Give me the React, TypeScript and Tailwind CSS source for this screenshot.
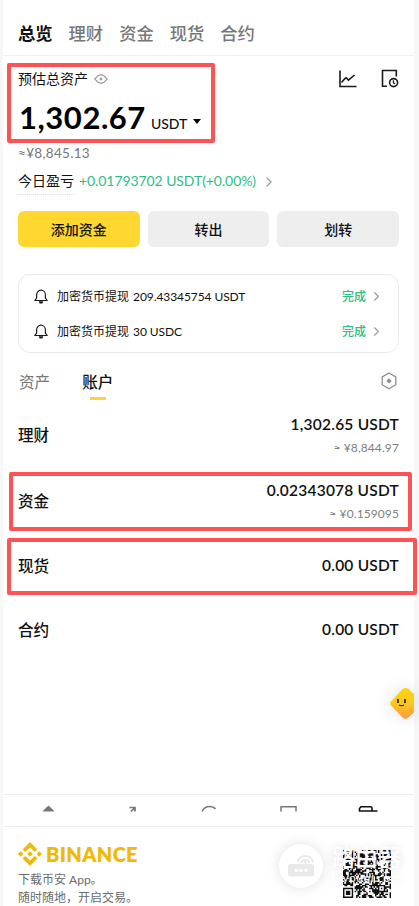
import React from 'react';
import { ChevronRight } from 'lucide-react';

const tabs = ['总览', '理财', '资金', '现货', '合约'];

const records = [
  { id: 1, label: '加密货币提现', amount: '209.43345754 USDT' },
  { id: 2, label: '加密货币提现', amount: '30 USDC' },
];

const accounts = [
  { name: '理财', amount: '1,302.65 USDT', fiat: '≈ ¥8,844.97', height: 'h-[66px]' },
  { name: '资金', amount: '0.02343078 USDT', fiat: '≈ ¥0.159095', height: 'h-[66px]' },
  { name: '现货', amount: '0.00 USDT', fiat: '', height: 'h-[64px]' },
  { name: '合约', amount: '0.00 USDT', fiat: '', height: 'h-[64px]' },
];

const QR_SIZE = 33;

const finder = (x: number, y: number) => {
  if (x < 0 || y < 0 || x > 6 || y > 6) return false;
  const ring = Math.max(Math.abs(x - 3), Math.abs(y - 3));
  return ring !== 2;
};

const buildModules = () => {
  const cells: string[] = [];
  let seed = 90217;
  for (let y = 0; y < QR_SIZE; y++) {
    for (let x = 0; x < QR_SIZE; x++) {
      seed = (seed * 16807) % 2147483647;
      let on = seed / 2147483647 > 0.42;
      const far = QR_SIZE - 7;
      if (x < 8 && y < 8) on = finder(x, y);
      else if (x >= far - 1 && y < 8) on = finder(x - far, y);
      else if (x < 8 && y >= far - 1) on = finder(x, y - far);
      else if (Math.abs(x - 26) < 3 && Math.abs(y - 26) < 3) {
        on = Math.max(Math.abs(x - 26), Math.abs(y - 26)) !== 1;
      }
      if (on) cells.push(`M${x} ${y}h1v1h-1z`);
    }
  }
  return cells.join('');
};

const qrPath = buildModules();

const EyeIcon = () => (
  <svg width="14" height="10" viewBox="0 0 14 10" fill="none" stroke="#999" strokeWidth="1.1">
    <path d="M.7 5 4 1.8Q7 0 10 1.8L13.3 5 10 8.2Q7 10 4 8.2Z" />
    <path d="M7 3.3 8.7 5 7 6.7 5.3 5Z" fill="#999" stroke="none" />
  </svg>
);

const ChartIcon = () => (
  <svg width="18" height="18" viewBox="0 0 18 18" fill="none" stroke="#1b1b1b" strokeWidth="1.6">
    <path d="M1 .5v16h16.5" />
    <path d="m2.5 12.5 3.5-4 1.500-.5 2 2.200L15.500 5" />
  </svg>
);

const HistoryIcon = () => (
  <svg width="18" height="19" viewBox="0 0 18 19" fill="none" stroke="#1b1b1b" strokeWidth="1.6">
    <path d="M6 17.300H1.500V1.500h13.800v6" />
    <circle cx="12.600" cy="13.600" r="4" />
    <path d="M12.400 11.300v2.500l1.600 1" strokeWidth="1.2" />
  </svg>
);

const BellIcon = () => (
  <svg width="14" height="15" viewBox="0 0 14 15" fill="none" stroke="#1b1b1b" strokeWidth="1.2" strokeLinejoin="round">
    <path d="M2.600 6a4.400 4.800 0 0 1 8.800 0v3.200l1.800 2.300H.8l1.800-2.300Z" />
    <path d="M4.700 12.300h4.600L8.400 14.400H5.600Z" fill="#1b1b1b" stroke="none" />
  </svg>
);

const HexIcon = () => (
  <svg width="16" height="18" viewBox="0 0 16 18" fill="none" stroke="#8f8f8f" strokeWidth="1.3">
    <path d="m8 1 6.800 3.900v7.800L8 16.700l-6.800-4V4.900Z" />
    <path d="M8 6.200 10.700 8.900 8 11.600 5.300 8.900Z" fill="#8f8f8f" stroke="none" />
  </svg>
);

const BinanceIcon = () => (
  <svg width="24" height="24" viewBox="0 0 24 24" fill="#efb90b">
    <path d="M7.340 10.100 12 5.440l4.660 4.660 2.710-2.710L12 0 4.630 7.390ZM0 12l2.710-2.710L5.420 12l-2.710 2.710ZM7.340 13.900 12 18.560l4.660-4.660 2.710 2.710L12 24l-7.370-7.390ZM18.580 12l2.710-2.710L24 12l-2.710 2.710ZM14.750 12 12 9.250 9.250 12 12 14.750Z" />
  </svg>
);

const Mascot = () => (
  <svg width="24" height="34" viewBox="0 0 24 34" className="drop-shadow-[0_0_9px_rgba(0,0,0,0.13)]">
    <defs>
      <linearGradient id="mascot" x1="0" y1="0" x2="0" y2="1">
        <stop offset="0" stopColor="#f7d60f" />
        <stop offset="0.5" stopColor="#fbc81c" />
        <stop offset="1" stopColor="#fd9a4a" />
      </linearGradient>
    </defs>
    <path d="M1 14.500 12.500 2Q15.500 0 18.500 2L24 7v18.500l-6 5.500q-2.500 1.500-5 0L1 18.500Q-.6 16.500 1 14.500Z" fill="url(#mascot)" />
    <path d="M8 12v4M15 12v4" stroke="#33270c" strokeWidth="1.8" />
    <path d="M9 18q2.500 1.200 5 0" fill="none" stroke="#33270c" strokeWidth="1.1" />
  </svg>
);

const BottomNav = () => (
  <nav className="h-[33px] border-y border-[#eeeeee] flex items-start justify-between pl-[39px] pr-[36px] pt-[10px] text-[#777]">
    <svg width="13" height="7" viewBox="0 0 13 7"><path d="M1 6.500V5.800L6.500.5 12 5.800v.7Z" fill="currentColor" /></svg>
    <svg className="ml-[6px]" width="14" height="7" viewBox="0 0 14 7" fill="none" stroke="currentColor" strokeWidth="1.7">
      <path d="M7.500 2.500H13v4M12.500 3 9 6.500" />
    </svg>
    <svg className="ml-[4px]" width="16" height="7" viewBox="0 0 16 7" fill="none" stroke="currentColor" strokeWidth="1.4">
      <path d="M1 6.500Q3.500 1.500 8.500 1.500q4 0 6 2.500" />
    </svg>
    <svg className="ml-[2px]" width="17" height="7" viewBox="0 0 17 7" fill="none" stroke="currentColor" strokeWidth="1.5">
      <path d="M1 6.500V1.800h15v4.700" />
    </svg>
    <svg width="20" height="7" viewBox="0 0 20 7" fill="none" stroke="#111" strokeWidth="1.6">
      <path d="M1.500 6.200V3.500l1.500-1.700h9.500q1.500 0 1.500 1.500v2.500M1 6h18.500" />
    </svg>
  </nav>
);

const RouterBadge = () => (
  <div className="size-11 rounded-full bg-white shadow-[0_0_14px_rgba(0,0,0,0.13)] flex items-center justify-center">
    <svg className="-mt-[3px]" width="26" height="24" viewBox="0 0 26 24" fill="#e9e9e9">
      <rect y="11" width="26" height="12.500" rx="2.500" />
      <g fill="none" stroke="#e9e9e9" strokeWidth="2">
        <path d="M9.500 9a8 8 0 0 1 15.500 0M13.300 10a4.200 4.200 0 0 1 8 0M17.300 7v5" />
      </g>
      <g fill="#fff">
        <circle cx="8" cy="17.500" r="1.700" />
        <circle cx="13" cy="17.500" r="1.700" />
        <circle cx="18" cy="17.500" r="1.700" />
      </g>
    </svg>
  </div>
);

const App: React.FC = () => {
  return (
    <div className="relative w-[419px] h-[906px] overflow-hidden bg-[#f7f7f7] pl-[3px] pr-[5px] font-['Lato','Noto_Sans_CJK_SC',sans-serif] text-[#111]">
      <div className="h-full bg-white flex flex-col">
        {/* Top tabs */}
        <header className="h-14 shrink-0 border-b border-[#f0f0f0] flex items-end gap-4 pl-[15px] pb-[9px] text-[17.3px] leading-[25px] text-[#777]">
          {tabs.map((tab, i) => (
            <span key={tab} className={i === 0 ? 'font-bold text-[#111]' : 'font-medium'}>{tab}</span>
          ))}
        </header>

        {/* Balance */}
        <section className="h-[155px] shrink-0 px-[15px] pt-3">
          <div className="flex justify-between h-[22px]">
            <div className="flex items-center gap-[6px] text-[14px] -mt-px">
              <span>预估总资产</span>
              <EyeIcon />
            </div>
            <div className="flex items-center gap-[24px] -mt-px">
              <ChartIcon />
              <HistoryIcon />
            </div>
          </div>
          <div className="h-[54px] pl-px flex items-baseline">
            <span className="text-[31px] leading-[54px] font-bold text-black tracking-[0.55px]">1,302.67</span>
            <span className="ml-[5px] text-[14px] font-medium">USDT</span>
            <svg className="ml-[6px] mb-[5px] self-baseline" width="8" height="10" viewBox="0 0 8 10"><path d="M0 0h8L4 5Z" /></svg>
          </div>
          <div className="h-[18px] leading-[18px] text-[13.500px] text-[#777] tracking-[0.3px]">≈¥8,845.13</div>
          <div className="mt-[7px] h-[26px] flex items-center">
            <span className="h-[26px] leading-[24px] text-[14px] border-b border-dotted border-[#ddd]">今日盈亏</span>
            <span className="ml-[5px] mb-[2px] text-[14px] leading-[24px] text-[#2ebd85] whitespace-nowrap tracking-[-0.08px]">+0.01793702 USDT(+0.00%)</span>
            <ChevronRight size={16} strokeWidth={1.8} className="ml-[5px] text-[#999]" />
          </div>
        </section>

        <div className="mx-[15px] grid grid-cols-3 gap-2 h-9 shrink-0 text-[14px] font-medium">
          <button className="rounded-md bg-[#fed730]">添加资金</button>
          <button className="rounded-md bg-[#eeeeee]">转出</button>
          <button className="rounded-md bg-[#eeeeee]">划转</button>
        </div>

        {/* Recent withdrawals */}
        <section className="mx-[15px] mt-[27px] h-[79px] shrink-0 rounded-xl border border-[#eaeaea] pl-[15px] pr-[14px] pt-1">
          {records.map(r => (
            <div key={r.id} className="h-[35px] flex items-center text-[12px]">
              <BellIcon />
              <span className="ml-[9px]">{r.label}</span>
              <span className="ml-1 tracking-[-0.08px]">{r.amount}</span>
              <span className="ml-auto text-[#2ebd85] font-medium">完成</span>
              <ChevronRight size={15} strokeWidth={1.8} className="ml-[3px] text-[#999]" />
            </div>
          ))}
        </section>

        <div className="mx-[15px] mt-[15px] h-[34px] shrink-0 flex items-start text-[15.600px] leading-[28px]">
          <span className="text-[#777] pl-px">资产</span>
          <span className="ml-8 flex flex-col items-center font-medium">
            账户
            <i className="mt-px w-4 h-[3px] bg-[#fcd535]" />
          </span>
          <span className="ml-auto mt-[4px] mr-[2px]"><HexIcon /></span>
        </div>

        {/* Accounts */}
        <section className="mx-[15px] mt-[1px] shrink-0">
          {accounts.map(a => (
            <div key={a.name} className={`${a.height} flex items-center justify-between`}>
              <span className="text-[15.600px] font-medium">{a.name}</span>
              <div className={`text-right whitespace-nowrap ${a.fiat ? '' : 'pb-[3px]'}`}>
                <div className="text-[15.500px] leading-[23px] font-semibold tracking-[0.22px]">{a.amount}</div>
                {a.fiat && <div className="text-[12px] leading-[23px] text-[#808080] tracking-[0.1px]">{a.fiat}</div>}
              </div>
            </div>
          ))}
        </section>

        <div className="mt-auto shrink-0">
          <BottomNav />
          <footer className="h-[79px] px-[15px] pt-[15px] flex justify-between">
            <div>
              <div className="flex items-center gap-[4px]">
                <BinanceIcon />
                <span className="text-[20px] leading-6 font-extrabold tracking-[0.35px] text-[#efb90b]">BINANCE</span>
              </div>
              <p className="mt-[5px] text-[12px] leading-[18px] text-[#6b6b6b]">下载币安 App。<br />随时随地，开启交易。</p>
            </div>
            <svg className="mt-[8px] mr-[8px]" width="48" height="48" viewBox="0 0 33 33">
              <path d={qrPath} fill="#111" />
            </svg>
          </footer>
        </div>
      </div>

      {/* Highlight frames */}
      <div className="absolute left-[7px] top-[63px] w-[208px] h-[80px] rounded-[2px] border-4 border-[#ff5353]" />
      <div className="absolute left-[9px] top-[472px] w-[403px] h-[59px] rounded-[2px] border-4 border-[#ff5353]" />
      <div className="absolute left-[7px] top-[538px] w-[410px] h-[57px] rounded-[2px] border-4 border-[#ff5353]" />

      <div className="absolute left-[390px] top-[687px] w-[24px]"><Mascot /></div>

      {/* Watermark */}
      <div className="absolute left-[279px] top-[844px]"><RouterBadge /></div>
      <div className="absolute left-[332px] top-[845px] text-white [text-shadow:0_0_10px_rgba(0,0,0,0.15)]">
        <div className="text-[23px] leading-[25px] font-medium">路由器</div>
        <div className="text-[12px] leading-[15px] tracking-[0.5px]">luyouqi.com</div>
      </div>
    </div>
  );
};

export default App;
